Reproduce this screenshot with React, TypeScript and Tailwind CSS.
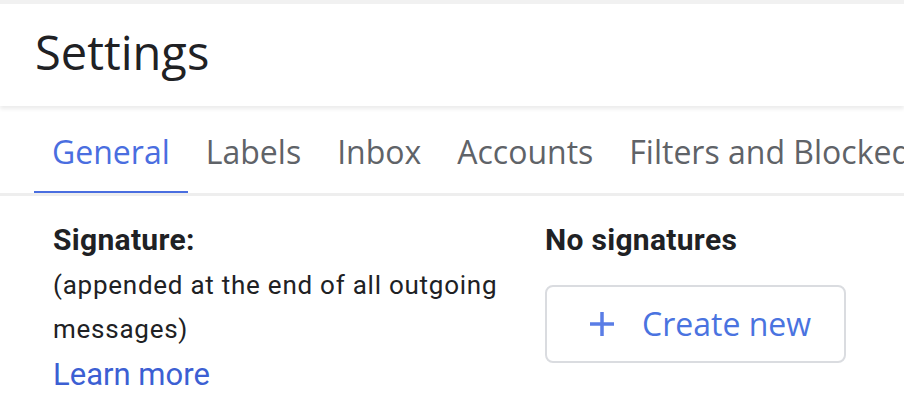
const TABS = ["General", "Labels", "Inbox", "Accounts", "Filters and Blocked Addresses", "Forwarding"];

export default function App() {
  return (
    <div className="w-[904px] h-[418px] overflow-hidden bg-white" style={{ fontFamily: "Roboto, sans-serif" }}>
      <div className="h-[4px] bg-[#f1f1f1]" />

      {/* Header */}
      <div className="relative z-10 h-[102px] flex items-center pl-[35px] pb-[6px] bg-white shadow-[0_3px_4px_rgba(0,0,0,0.08)]">
        <h1 className="text-[47px] text-[#202124] leading-none" style={{ fontFamily: "'Open Sans', sans-serif" }}>
          Settings
        </h1>
      </div>

      {/* Tabs */}
      <div className="flex h-[90px] border-b-[3px] border-[#eeeeee] pl-[34px] whitespace-nowrap overflow-hidden">
        {TABS.map((tab, i) => (
          <div
            key={tab}
            className={`relative flex items-center px-[18px] pt-[4px] text-[32px] ${
              i === 0 ? "text-[#4a6ee0]" : "text-[#5f6368]"
            }`}
            style={{ fontFamily: "'Open Sans', sans-serif" }}
          >
            {tab}
            {i === 0 && <div className="absolute left-0 right-0 -bottom-[3px] h-[5px] bg-[#4a6ee0]" />}
          </div>
        ))}
      </div>

      {/* Content */}
      <div className="flex pl-[53px] pt-[26px]">
        <div className="w-[492px] text-[#202124]">
          <div className="text-[30px] font-bold leading-[36px] tracking-[0.3px]">Signature:</div>
          <div className="mt-[5px] text-[26px] leading-[44px] tracking-[0.75px] text-[#202124]">
            (appended at the end of all outgoing messages)
          </div>
          <div className="text-[31px] leading-[48px] text-[#3c5fd3]">Learn more</div>
        </div>
        <div>
          <div className="text-[30px] font-bold leading-[36px] tracking-[0.3px] text-[#202124]">No signatures</div>
          <button className="mt-[27px] w-[301px] h-[78px] flex items-center border-2 border-[#dadce0] rounded-[8px] pl-[42px] text-[#4a73e0]">
            <svg width="26" height="26" viewBox="0 0 26 26" className="shrink-0">
              <path d="M13 1v24M1 13h24" stroke="#5a7de6" strokeWidth="3.5" strokeLinecap="butt" fill="none" />
            </svg>
            <span className="ml-[27px] text-[32px] leading-none" style={{ fontFamily: "'Open Sans', sans-serif" }}>
              Create new
            </span>
          </button>
        </div>
      </div>
    </div>
  );
}
